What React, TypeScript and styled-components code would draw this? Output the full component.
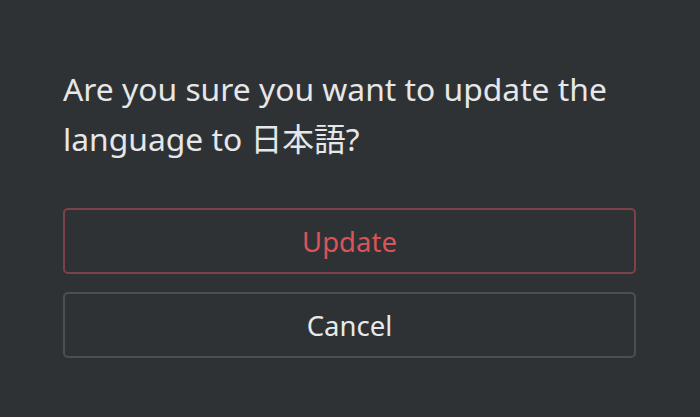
import styled, { createGlobalStyle } from "styled-components";

const GlobalStyle = createGlobalStyle`
  html, body {
    margin: 0;
    padding: 0;
    background: #2f3235;
  }

  body {
    font-family: "Noto Sans", "Noto Sans CJK JP", sans-serif;
  }
`;

export default function App() {
  return (
    <>
      <GlobalStyle />
      <Dialog>
        <Message>Are you sure you want to update the language to 日本語?</Message>
        <Actions>
          <ActionButton $variant="danger">Update</ActionButton>
          <ActionButton>Cancel</ActionButton>
        </Actions>
      </Dialog>
    </>
  );
}

const Dialog = styled.div`
  box-sizing: border-box;
  width: 700px;
  height: 417px;
  padding: 64px 64px 0 63px;
  display: flex;
  flex-direction: column;
`;

const Message = styled.p`
  margin: 0;
  font-size: 31.8px;
  line-height: 50px;
  color: #e6e7e8;
  width: 573px;
`;

const Actions = styled.div`
  margin-top: 44px;
  display: flex;
  flex-direction: column;
  gap: 18px;
  width: 573px;
`;

const ActionButton = styled.button<{ $variant?: "danger" }>`
  box-sizing: border-box;
  height: 66px;
  background: transparent;
  border: 2px solid
    ${({ $variant }) => ($variant === "danger" ? "#7c4247" : "#4b4e53")};
  border-radius: 5px;
  color: ${({ $variant }) => ($variant === "danger" ? "#d9545a" : "#e8e9ea")};
  font-family: "Noto Sans", sans-serif;
  font-size: 27.5px;
  cursor: pointer;
`;
